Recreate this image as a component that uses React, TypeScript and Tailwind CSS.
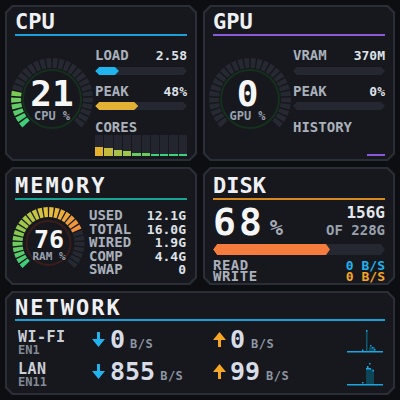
import React from "react";

const outerClip =
  "[clip-path:polygon(7px_0,calc(100%_-_7px)_0,100%_7px,100%_calc(100%_-_7px),calc(100%_-_7px)_100%,7px_100%,0_calc(100%_-_7px),0_7px)]";
const innerClip =
  "[clip-path:polygon(6px_0,calc(100%_-_6px)_0,100%_6px,100%_calc(100%_-_6px),calc(100%_-_6px)_100%,6px_100%,0_calc(100%_-_6px),0_6px)]";
const hexClip =
  "[clip-path:polygon(4px_0,calc(100%_-_4px)_0,100%_50%,calc(100%_-_4px)_100%,4px_100%,0_50%)]";

type Stop = [number, string];
const GRAD: Stop[] = [
  [0, "#3ad07c"],
  [0.25, "#8cc84c"],
  [0.5, "#e6c23c"],
  [0.75, "#f48a3a"],
  [1, "#f06a3a"],
];

function hex2rgb(h: string) {
  const n = parseInt(h.slice(1), 16);
  return [(n >> 16) & 255, (n >> 8) & 255, n & 255];
}
function colorAt(t: number) {
  for (let i = 0; i < GRAD.length - 1; i++) {
    const [t0, c0] = GRAD[i];
    const [t1, c1] = GRAD[i + 1];
    if (t <= t1) {
      const k = (t - t0) / (t1 - t0);
      const a = hex2rgb(c0);
      const b = hex2rgb(c1);
      const m = a.map((v, j) => Math.round(v + (b[j] - v) * k));
      return `rgb(${m[0]},${m[1]},${m[2]})`;
    }
  }
  return GRAD[GRAD.length - 1][1];
}

function Gauge({
  w,
  h,
  cx,
  cy,
  r1,
  r2,
  ring,
  ringColor,
  pct,
  n = 28,
}: {
  w: number;
  h: number;
  cx: number;
  cy: number;
  r1: number;
  r2: number;
  ring: number;
  ringColor: string;
  pct: number;
  n?: number;
}) {
  const step = 270 / n;
  const gap = 2.4;
  const segs = [];
  for (let i = 0; i < n; i++) {
    const a0 = ((135 + i * step + gap / 2) * Math.PI) / 180;
    const a1 = ((135 + (i + 1) * step - gap / 2) * Math.PI) / 180;
    const p = (r: number, a: number) =>
      `${(cx + r * Math.cos(a)).toFixed(2)},${(cy + r * Math.sin(a)).toFixed(2)}`;
    const t = (i + 0.5) / n;
    const fill = t < pct ? colorAt(t) : "#262932";
    segs.push(
      <polygon key={i} points={`${p(r1, a0)} ${p(r2, a0)} ${p(r2, a1)} ${p(r1, a1)}`} fill={fill} />
    );
  }
  return (
    <svg width={w} height={h} viewBox={`0 0 ${w} ${h}`} className="absolute inset-0">
      <circle cx={cx} cy={cy} r={ring} fill="none" stroke={ringColor} strokeWidth={2} />
      {segs}
    </svg>
  );
}

function Panel({
  children,
  className = "",
}: {
  children: React.ReactNode;
  className?: string;
}) {
  return (
    <div className={`bg-[#2a2e36] p-[2px] ${outerClip} ${className}`}>
      <div className={`h-full bg-[#16181d] overflow-hidden ${innerClip}`}>{children}</div>
    </div>
  );
}

function Title({ text, color, extra = "" }: { text: string; color: string; extra?: string }) {
  return (
    <>
      <div className={`mx-[8px] text-[22px] leading-[22px] text-[#eef0f4] ${extra}`}>{text}</div>
      <div className={`mx-[8px] h-[2px] ${color}`} />
    </>
  );
}

function Bar({ pct, fill, h = "h-[8px]" }: { pct: number; fill: string; h?: string }) {
  return (
    <div className={`${h} bg-[#252831] ${hexClip}`}>
      {pct > 0 && <div className={`h-full ${fill} ${hexClip}`} style={{ width: `${pct}%` }} />}
    </div>
  );
}

function StatRow({ label, value }: { label: string; value: string }) {
  return (
    <div className="flex items-baseline justify-between">
      <span className="text-[14px] leading-[14px] text-[#aab0bc]">{label}</span>
      <span className="text-[13px] leading-[14px] text-[#dfe2e8]">{value}</span>
    </div>
  );
}

const cores: [number, string][] = [
  [9, "bg-[#e4b22e]"],
  [8, "bg-[#c4ba3e]"],
  [6, "bg-[#a8c04a]"],
  [5, "bg-[#9ec84c]"],
  [3, "bg-[#68cc5c]"],
  [3, "bg-[#68cc5c]"],
  [2, "bg-[#3dd07c]"],
  [2, "bg-[#3dd07c]"],
  [2, "bg-[#3dd07c]"],
  [2, "bg-[#3dd07c]"],
];

function DownArrow() {
  return (
    <svg width="13" height="15" viewBox="0 0 13 15" className="shrink-0">
      <path d="M5 0h3v7h5l-6.5 8L0 7h5z" fill="#22b2ee" />
    </svg>
  );
}
function UpArrow() {
  return (
    <svg width="13" height="15" viewBox="0 0 13 15" className="shrink-0">
      <path d="M6.5 0L13 8H8v7H5V8H0z" fill="#f5a623" />
    </svg>
  );
}

function Chart1() {
  return (
    <svg width="36" height="23" viewBox="0 0 36 23">
      <rect x="19" y="1" width="1.5" height="20" fill="#0d5a73" />
      <rect x="19" y="0" width="1.5" height="1.5" fill="#1aa6e0" />
      <rect x="22" y="17" width="6" height="4" fill="#0d4a5e" />
      <rect x="23" y="15" width="1.5" height="1.5" fill="#1aa6e0" />
      <rect x="25" y="17" width="1.5" height="1.5" fill="#1aa6e0" />
      <rect x="27" y="19" width="1.5" height="1.5" fill="#1aa6e0" />
      <rect x="15" y="19.5" width="1.5" height="1.5" fill="#1aa6e0" />
      <rect x="0" y="21" width="36" height="1.5" fill="#1aa6e0" />
    </svg>
  );
}
function Chart2() {
  return (
    <svg width="36" height="24" viewBox="0 0 36 24">
      <rect x="19" y="7" width="8" height="15" fill="#0c4658" />
      <rect x="22" y="1" width="1.5" height="1.5" fill="#1aa6e0" />
      <rect x="20" y="4" width="1.5" height="2" fill="#1aa6e0" />
      <rect x="19" y="6" width="2" height="1.5" fill="#1aa6e0" />
      <rect x="21" y="6" width="3" height="1.5" fill="#1aa6e0" />
      <rect x="25.5" y="8" width="1.5" height="1.5" fill="#1aa6e0" />
      <rect x="15" y="20" width="1.5" height="1.5" fill="#1aa6e0" />
      <rect x="0" y="22" width="36" height="1.5" fill="#1aa6e0" />
    </svg>
  );
}

function NetRow({
  name,
  dev,
  down,
  up,
  chart,
}: {
  name: string;
  dev: string;
  down: string;
  up: string;
  chart: React.ReactNode;
}) {
  return (
    <div className="grid grid-cols-[74px_121px_134px_36px] h-[32px]">
      <div className="flex flex-col mt-[3px]">
        <span className="text-[15px] leading-[14px] text-[#c9ced8] tracking-[0.5px]">{name}</span>
        <span className="mt-[1px] text-[12px] leading-[11px] text-[#838a97]">{dev}</span>
      </div>
      <div className="flex items-start">
        <div className="mt-[5px]">
          <DownArrow />
        </div>
        <div className="flex items-baseline ml-[5px]">
          <span className="text-[25px] leading-[25px] text-[#d8dce6]">{down}</span>
          <span className="ml-[5px] text-[12px] leading-[12px] text-[#8e95a2] tracking-[0.5px]">B/S</span>
        </div>
      </div>
      <div className="flex items-start">
        <div className="mt-[5px]">
          <UpArrow />
        </div>
        <div className="flex items-baseline ml-[4px]">
          <span className="text-[25px] leading-[25px] text-[#d8dce6]">{up}</span>
          <span className="ml-[6px] text-[12px] leading-[12px] text-[#8e95a2] tracking-[0.5px]">B/S</span>
        </div>
      </div>
      <div className="mt-[3px]">{chart}</div>
    </div>
  );
}

export default function App() {
  return (
    <div className="w-[400px] h-[400px] bg-[#0c0e11] p-[5px] grid grid-cols-2 grid-rows-[156px_118px_104px] gap-[6px] font-['DejaVu_Sans_Mono',monospace] font-bold">
      {/* CPU */}
      <Panel>
        <div className="pt-[4px]" />
        <Title text="CPU" color="bg-[#1d9fd8]" extra="mb-[1px]" />
        <div className="flex pr-[8px]">
          <div className="relative w-[88px] h-[90px] mt-[18px] shrink-0">
            <Gauge w={88} h={90} cx={45} cy={45} r1={31} r2={41} ring={29} ringColor="#15301c" pct={0.21} />
            <div className="absolute inset-0 flex flex-col items-center pt-[26px] pl-[2px]">
              <span className="text-[36px] leading-[28px] text-[#f6f6f6]">21</span>
              <span className="mt-[3px] text-[12px] leading-[10px] text-[#9aa2b0]">CPU %</span>
            </div>
          </div>
          <div className="flex-1 flex flex-col mt-[12px]">
            <StatRow label="LOAD" value="2.58" />
            <div className="mt-[4px]">
              <Bar pct={26} fill="bg-[#1fb4ee]" />
            </div>
            <div className="mt-[9px]">
              <StatRow label="PEAK" value="48%" />
            </div>
            <div className="mt-[3px]">
              <Bar pct={47} fill="bg-[#e3b235]" />
            </div>
            <div className="mt-[10px] text-[14px] leading-[14px] text-[#aab0bc]">CORES</div>
            <div className="mt-[1px] grid grid-cols-10 gap-[1px] h-[21px]">
              {cores.map(([hh, c], i) => (
                <div key={i} className="bg-[#23262e] flex flex-col justify-end">
                  <div className={c} style={{ height: hh }} />
                </div>
              ))}
            </div>
          </div>
        </div>
      </Panel>

      {/* GPU */}
      <Panel>
        <div className="pt-[4px]" />
        <Title text="GPU" color="bg-[#8a5ad8]" extra="mb-[1px]" />
        <div className="flex pr-[8px]">
          <div className="relative w-[88px] h-[90px] mt-[18px] shrink-0">
            <Gauge w={88} h={90} cx={45} cy={45} r1={31} r2={41} ring={29} ringColor="#15301c" pct={0} />
            <div className="absolute inset-0 flex flex-col items-center pt-[26px] pr-[3px]">
              <span className="text-[36px] leading-[28px] text-[#f6f6f6]">0</span>
              <span className="mt-[3px] text-[12px] leading-[10px] text-[#9aa2b0]">GPU %</span>
            </div>
          </div>
          <div className="flex-1 flex flex-col mt-[12px]">
            <StatRow label="VRAM" value="370M" />
            <div className="mt-[4px]">
              <Bar pct={0} fill="bg-[#8a5ad8]" />
            </div>
            <div className="mt-[9px]">
              <StatRow label="PEAK" value="0%" />
            </div>
            <div className="mt-[3px]">
              <Bar pct={0} fill="bg-[#8a5ad8]" />
            </div>
            <div className="mt-[10px] text-[14px] leading-[14px] text-[#aab0bc]">HISTORY</div>
            <div className="mt-[1px] h-[21px] flex justify-end items-end">
              <div className="w-[18px] h-[2px] bg-[#8a5ad8]" />
            </div>
          </div>
        </div>
      </Panel>

      {/* MEMORY */}
      <Panel>
        <div className="pt-[6px]" />
        <Title text="MEMORY" color="bg-[#19a596]" extra="mb-[1px] tracking-[2px]" />
        <div className="flex pr-[9px]">
          <div className="relative w-[82px] h-[80px] shrink-0">
            <Gauge w={82} h={80} cx={41.5} cy={43} r1={26} r2={36} ring={22} ringColor="#3a1d1a" pct={0.76} />
            <div className="absolute inset-0 flex flex-col items-center pt-[30px] pl-[2px]">
              <span className="text-[25px] leading-[19px] text-[#f6f6f6]">76</span>
              <span className="mt-[3px] text-[11px] leading-[9px] text-[#9aa2b0]">RAM %</span>
            </div>
          </div>
          <div className="flex-1 flex flex-col mt-[9px]">
            {[
              ["USED", "12.1G"],
              ["TOTAL", "16.0G"],
              ["WIRED", "1.9G"],
              ["COMP", "4.4G"],
              ["SWAP", "0"],
            ].map(([l, v]) => (
              <div key={l} className="flex items-baseline justify-between h-[13.5px]">
                <span className="text-[14px] leading-[13.5px] text-[#aab0bc]">{l}</span>
                <span className="text-[13px] leading-[13.5px] text-[#dfe2e8]">{v}</span>
              </div>
            ))}
          </div>
        </div>
      </Panel>

      {/* DISK */}
      <Panel>
        <div className="pt-[6px]" />
        <Title text="DISK" color="bg-[#d98a1e]" extra="mb-[1px]" />
        <div className="px-[8px]">
          <div className="flex justify-between h-[44px]">
            <div className="flex items-baseline mt-[2.5px] h-[38px]">
              <span className="text-[38px] leading-[38px] text-[#f6f6f6] tracking-[3px]">68</span>
              <span className="ml-[5px] text-[22px] leading-[22px] text-[#a4aab6]">%</span>
            </div>
            <div className="flex flex-col items-end mt-[5px]">
              <span className="text-[16px] leading-[16px] text-[#e4e7ec]">156G</span>
              <span className="mt-[2px] text-[14px] leading-[14px] text-[#9aa1ad]">OF 228G</span>
            </div>
          </div>
          <Bar pct={68} fill="bg-[#f47c3c]" h="h-[11px]" />
          <div className="mt-[5px] flex justify-between items-baseline h-[10.5px]">
            <span className="text-[14px] leading-[10.5px] text-[#aab0bc] tracking-[0.5px]">READ</span>
            <span className="text-[13px] leading-[10.5px] text-[#1db4f0]">0 B/S</span>
          </div>
          <div className="flex justify-between items-baseline h-[10.5px]">
            <span className="text-[14px] leading-[10.5px] text-[#aab0bc] tracking-[0.5px]">WRITE</span>
            <span className="text-[13px] leading-[10.5px] text-[#f5a623]">0 B/S</span>
          </div>
        </div>
      </Panel>

      {/* NETWORK */}
      <Panel className="col-span-2">
        <div className="pt-[4px]" />
        <Title text="NETWORK" color="bg-[#1a9fd8]" extra="tracking-[2px]" />
        <div className="pl-[11px] pt-[6px]">
          <NetRow name="WI-FI" dev="EN1" down="0" up="0" chart={<Chart1 />} />
          <NetRow name="LAN" dev="EN11" down="855" up="99" chart={<Chart2 />} />
        </div>
      </Panel>
    </div>
  );
}
